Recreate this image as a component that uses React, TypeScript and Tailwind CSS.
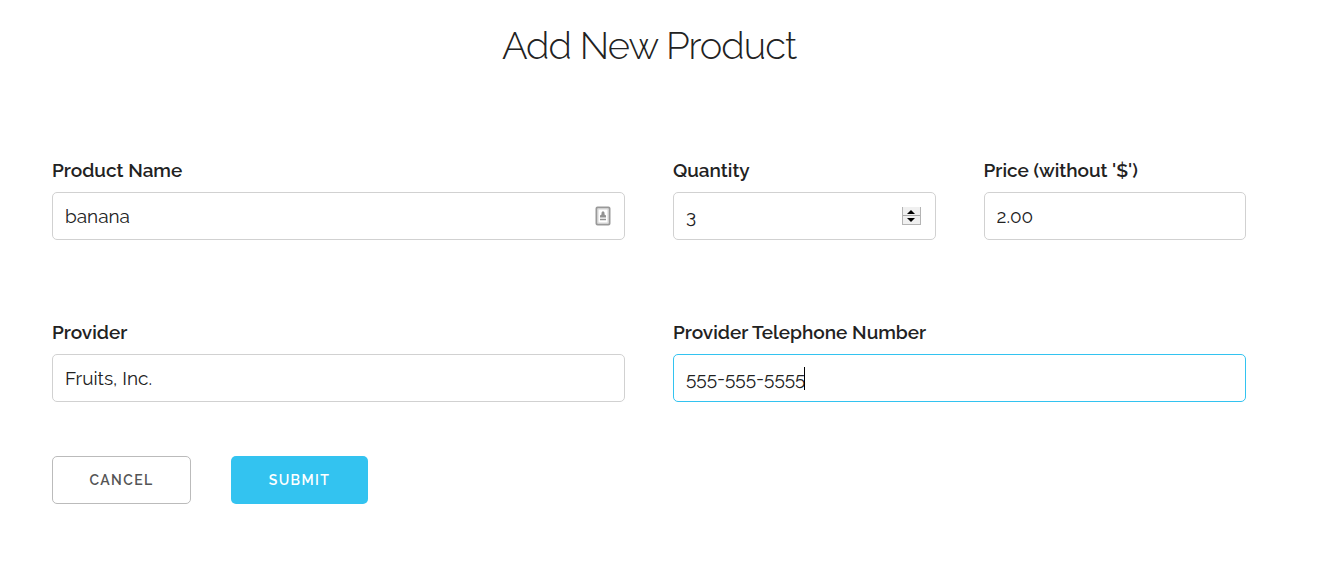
import React from "react";

type FieldProps = {
  id: string;
  label: string;
  value: string;
  wide?: boolean;
  type?: string;
  active?: boolean;
  children?: React.ReactNode;
};

function Field({ id, label, value, wide, type = "text", active, children }: FieldProps) {
  return (
    <div className={wide ? "col-span-2" : "col-span-1"}>
      <label htmlFor={id} className="mb-2 block text-[19px] leading-7 font-semibold whitespace-nowrap">
        {label}
      </label>
      <div className="relative">
        <input
          id={id}
          type={type}
          defaultValue={value}
          className={`block h-12 w-full rounded-[5px] border bg-white px-3 text-[19px] outline-none [appearance:textfield] [&::-webkit-inner-spin-button]:appearance-none ${
            active ? "border-[#33c3f0]" : "border-[#d1d1d1]"
          }`}
        />
        {children}
      </div>
    </div>
  );
}

function ContactIcon() {
  return (
    <svg
      aria-hidden="true"
      viewBox="0 0 16 20"
      className="absolute top-[14px] right-[14px] h-5 w-4"
      fill="none"
    >
      <rect x="1.5" y="1.5" width="13" height="17" rx="1" stroke="#999" strokeWidth="2" />
      <rect x="3" y="3" width="10" height="14" stroke="#d4d4d4" />
      <path d="M8 5L9.5 6.5V8.5L11 9.5V11.5H5V9.5L6.5 8.5V6.5Z" fill="#929292" />
      <path d="M5 13.5H11" stroke="#929292" strokeWidth="1.5" />
    </svg>
  );
}

function Spinner() {
  return (
    <div className="absolute top-[15px] right-[15px] flex h-[18px] w-[19px] flex-col border border-t-0 border-[#b4b4b4] bg-[#f0f0f0]">
      <button type="button" aria-label="Increase quantity" className="flex h-[9px] w-full items-center justify-center border-b border-[#a8a8a8]">
        <svg viewBox="0 0 8 4" className="mt-px h-1 w-2">
          <path d="M4 0L8 4H0Z" fill="#000" />
        </svg>
      </button>
      <button type="button" aria-label="Decrease quantity" className="flex h-2 w-full items-center justify-center">
        <svg viewBox="0 0 8 4" className="h-1 w-2">
          <path d="M0 0H8L4 4Z" fill="#000" />
        </svg>
      </button>
    </div>
  );
}

export default function App() {
  return (
    <main className="bg-white pt-5 pr-[73px] pb-14 pl-[52px] font-['Raleway','Lato',sans-serif] text-[#222]">
      <h1 className="text-center text-[38px] leading-[52px] font-light tracking-tight">Add New Product</h1>
      <form className="mt-[84px]" onSubmit={(e) => e.preventDefault()}>
        <div className="grid grid-cols-4 gap-x-12 gap-y-[78px]">
          <Field id="name" label="Product Name" value="banana" wide>
            <ContactIcon />
          </Field>
          <Field id="quantity" label="Quantity" value="3" type="number">
            <Spinner />
          </Field>
          <Field id="price" label="Price (without '$')" value="2.00" />
          <Field id="provider" label="Provider" value="Fruits, Inc." wide />
          <Field id="phone" label="Provider Telephone Number" value="555-555-5555" type="tel" wide active>
            <span aria-hidden="true" className="absolute top-[13px] left-[131px] h-[23px] w-px bg-black" />
          </Field>
        </div>
        <div className="mt-[54px] flex gap-10">
          <button type="button" className="h-12 w-[139px] rounded-[5px] border border-[#bbb] text-sm font-semibold tracking-widest text-[#555]">
            CANCEL
          </button>
          <button type="submit" className="h-12 w-[137px] rounded-[5px] bg-[#33c3f0] text-sm font-semibold tracking-widest text-white">
            SUBMIT
          </button>
        </div>
      </form>
    </main>
  );
}
